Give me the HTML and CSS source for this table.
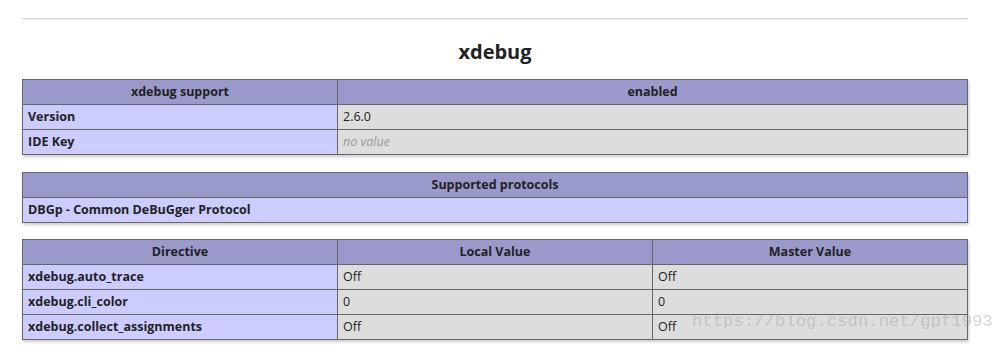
FILE: index.html
```html
<!DOCTYPE html>
<html>
<head>
<meta charset="utf-8">
<title>xdebug</title>
<link rel="stylesheet" href="styles.css">
</head>
<body>
<div class="page">
  <hr class="rule">
  <h2 class="title">xdebug</h2>
  <table class="info t1">
    <tr class="h"><th>xdebug support</th><th>enabled</th></tr>
    <tr><td class="e">Version</td><td class="v">2.6.0</td></tr>
    <tr><td class="e">IDE Key</td><td class="v"><i class="nv">no value</i></td></tr>
  </table>
  <table class="info t2">
    <tr class="h"><th>Supported protocols</th></tr>
    <tr><td class="e">DBGp - Common DeBuGger Protocol</td></tr>
  </table>
  <table class="info t3">
    <tr class="h"><th>Directive</th><th>Local Value</th><th>Master Value</th></tr>
    <tr><td class="e">xdebug.auto_trace</td><td class="v">Off</td><td class="v">Off</td></tr>
    <tr><td class="e">xdebug.cli_color</td><td class="v">0</td><td class="v">0</td></tr>
    <tr><td class="e">xdebug.collect_assignments</td><td class="v">Off</td><td class="v">Off</td></tr>
  </table>
</div>
<div class="watermark">https://blog.csdn.net/gpf19930</div>
</body>
</html>
```
FILE: styles.css
```css
html, body {
  margin: 0;
  padding: 0;
  background: #fff;
  overflow: hidden;
}
body {
  width: 992px;
  height: 356px;
  position: relative;
  font-family: "Open Sans", "Noto Sans", sans-serif;
  color: #222;
}
.page {
  padding: 18px 0 0 22px;
  width: 946px;
}
.rule {
  margin: 0;
  border: 0;
  height: 1px;
  width: 946px;
  background: #d4d4d4;
  box-shadow: 0 1px 2px #e6e6e6;
}
.title {
  margin: 21px 0 15px;
  font-size: 20px;
  line-height: 24px;
  font-weight: bold;
  text-align: center;
  color: #222;
}
.info {
  border-collapse: collapse;
  width: 946px;
  table-layout: fixed;
  box-shadow: 1px 2px 3px #ccc;
  margin: 0 0 17px;
  font-size: 12.5px;
  line-height: 16px;
}
.info th, .info td {
  border: 1px solid #666;
  padding: 4px 5px;
  text-align: left;
  vertical-align: baseline;
  height: 16px;
  white-space: nowrap;
  overflow: hidden;
}
.info .h th {
  background: #99c;
  text-align: center;
  font-weight: bold;
  color: #222;
}
.info .e {
  background: #ccf;
  font-weight: bold;
  color: #222;
}
.info .v {
  background: #ddd;
  color: #222;
}
.t1 th:first-child, .t1 td:first-child { width: 304px; }
.t3 th, .t3 td { width: 304px; }
.t2 { margin-bottom: 16px; }
.nv {
  color: #999;
  font-style: italic;
}
.watermark {
  position: absolute;
  left: 692px;
  top: 312px;
  font-family: "Liberation Mono", "DejaVu Sans Mono", monospace;
  font-size: 17.3px;
  line-height: 20px;
  color: rgba(150, 150, 150, 0.4);
  white-space: nowrap;
  pointer-events: none;
}
```
